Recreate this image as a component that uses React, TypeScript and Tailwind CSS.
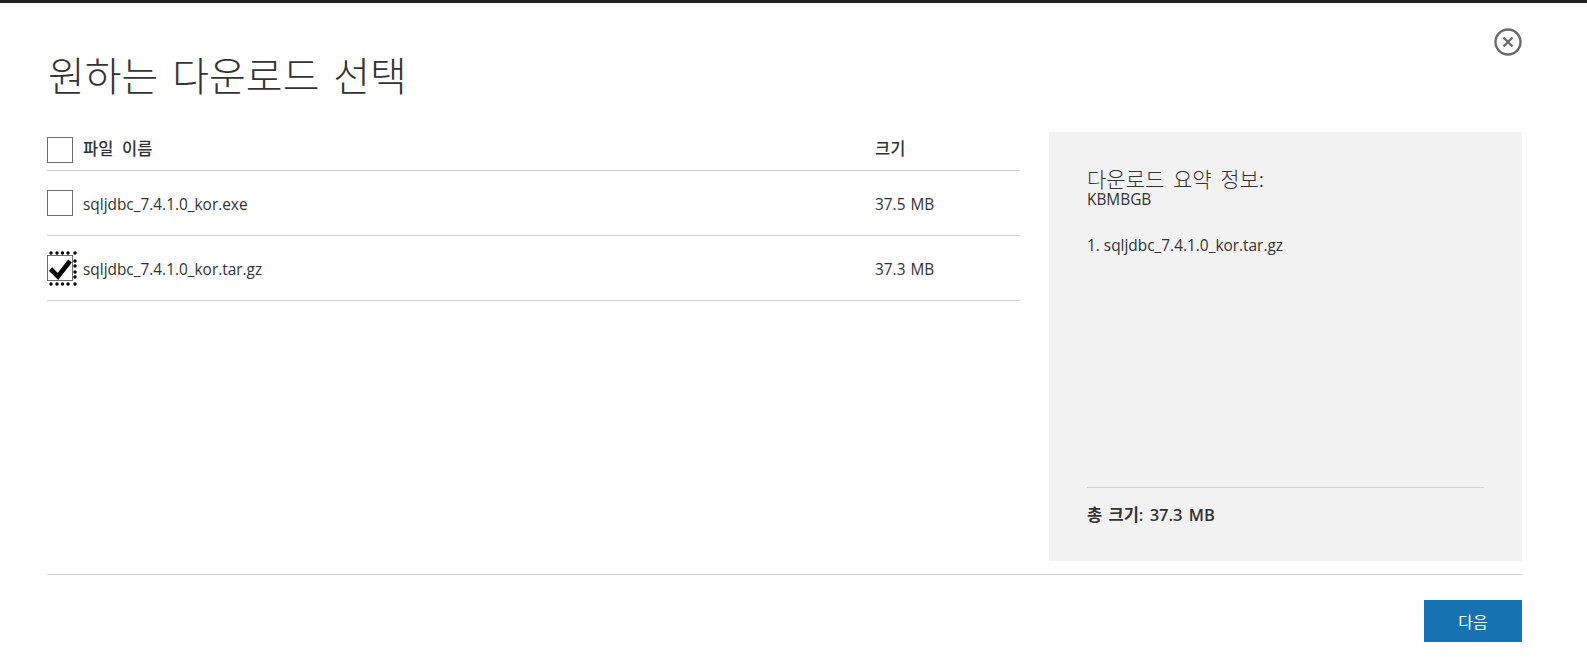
const dotsX = [4, 10, 15.5, 21, 28];
const dotsY = [10, 15, 21, 26];

const Checkbox = ({ checked, focused }: { checked?: boolean; focused?: boolean }) => (
  <span className="relative block w-[26px] h-[26px] shrink-0 border border-[#6d6d6d] bg-white">
    {checked && (
      <svg viewBox="0 0 26 26" className="absolute left-[-1px] top-[-1px] w-[26px] h-[26px]">
        <path d="M3.5 14 L11 21.5 L23 6" fill="none" stroke="#000" strokeWidth="4.6" />
      </svg>
    )}
    {focused && (
      <svg viewBox="0 0 30 35" className="absolute left-[-1px] top-[-5px] w-[30px] h-[35px]">
        {dotsX.map((x) => (
          <g key={x}>
            <circle cx={x} cy="2" r="1.7" fill="#000" />
            <circle cx={x} cy="33" r="1.7" fill="#000" />
          </g>
        ))}
        {dotsY.map((y) => (
          <circle key={y} cx="28" cy={y} r="1.7" fill="#000" />
        ))}
      </svg>
    )}
  </span>
);

const files = [
  { name: "sqljdbc_7.4.1.0_kor.exe", size: "37.5 MB" },
  { name: "sqljdbc_7.4.1.0_kor.tar.gz", size: "37.3 MB", checked: true },
];

export default function App() {
  return (
    <div className="w-[1587px] h-[663px] overflow-hidden bg-white border-t-[3px] border-[#222222] text-[#333333] font-['Open_Sans','Noto_Sans_CJK_KR',sans-serif]">
      <div className="relative pl-[47px] pr-[65px]">
        <button className="absolute right-[65px] top-[25px]">
          <svg viewBox="0 0 28 28" className="w-[28px] h-[28px]">
            <circle cx="14" cy="14" r="12.5" fill="none" stroke="#6b6b6b" strokeWidth="2.4" />
            <path d="M9.5 9.5 L18.5 18.5 M18.5 9.5 L9.5 18.5" fill="none" stroke="#6b6b6b" strokeWidth="2.4" />
          </svg>
        </button>
        <h1 className="pt-[44px] pl-[1px] h-[129px] text-[40px] leading-[54px] font-light [word-spacing:5px] font-['Noto_Sans_CJK_KR',sans-serif]">
          원하는 다운로드 선택
        </h1>
        <div className="flex h-[429px]">
          <div className="w-[973px] shrink-0">
            <div className="flex items-center h-[39px] border-b border-[#d2d2d2] pb-[2px]">
              <Checkbox />
              <span className="ml-[10px] w-[792px] text-[16.5px] leading-[20px] mb-[4px] font-medium [word-spacing:5px] font-['Noto_Sans_CJK_KR',sans-serif]">파일 이름</span>
              <span className="text-[16.5px] leading-[20px] mb-[4px] font-medium font-['Noto_Sans_CJK_KR',sans-serif]">크기</span>
            </div>
            {files.map((file) => (
              <div key={file.name} className="flex items-center h-[65px] border-b border-[#d2d2d2]">
                <Checkbox checked={file.checked} focused={file.checked} />
                <span className="ml-[10px] w-[792px] pt-[4px] text-[15.4px]">{file.name}</span>
                <span className="pt-[4px] text-[15.4px] [word-spacing:1px]">{file.size}</span>
              </div>
            ))}
          </div>
          <div className="ml-[29px] w-[473px] bg-[#f2f2f2] px-[38px] pt-[35px] pb-[35px] flex flex-col">
            <div className="text-[21px] leading-[23px] font-light [word-spacing:4px] font-['Noto_Sans_CJK_KR',sans-serif]">다운로드 요약 정보:</div>
            <div className="mt-[1px] text-[15.4px] leading-[17px]">KBMBGB</div>
            <div className="mt-[28px] text-[15.4px] leading-[20px]">1. sqljdbc_7.4.1.0_kor.tar.gz</div>
            <div className="mt-auto border-t border-[#d2d2d2] pt-[16px] text-[16.5px] leading-[22px] font-semibold [word-spacing:2px]">
              총 크기: 37.3 MB
            </div>
          </div>
        </div>
        <div className="mt-[13px] border-t border-[#d2d2d2] flex justify-end pt-[25px]">
          <button className="w-[98px] h-[42px] bg-[#1672b0] text-white text-[16px] font-['Noto_Sans_CJK_KR',sans-serif]">다음</button>
        </div>
      </div>
    </div>
  );
}
